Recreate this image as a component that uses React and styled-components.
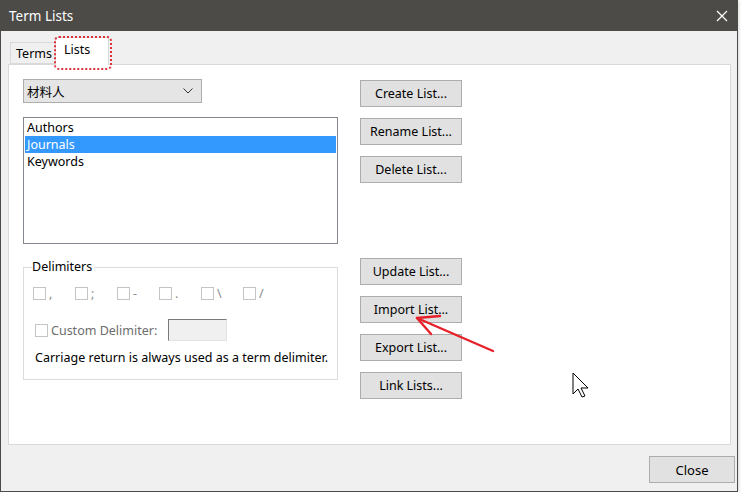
import React from "react";
import styled, { createGlobalStyle } from "styled-components";

const GlobalStyle = createGlobalStyle`
  html, body {
    margin: 0;
    padding: 0;
    background: #ffffff;
  }
  body {
    font-family: "Noto Sans", "Noto Sans CJK SC", sans-serif;
    font-size: 12.5px;
    color: #000;
  }
`;

const Window = styled.div`
  position: relative;
  width: 738px;
  height: 492px;
  box-sizing: border-box;
  border: 1px solid #4d4b48;
  border-top: none;
  background: #f0f0f0;
  display: flex;
  flex-direction: column;
  box-shadow: 1px 1px 3px rgba(0, 0, 0, 0.15);
`;

const TitleBar = styled.div`
  height: 31px;
  margin: 0 -1px;
  background: #4d4b48;
  color: #ffffff;
  display: flex;
  align-items: center;
  justify-content: space-between;
  padding: 0 10px 0 9px;
  font-size: 13.5px;
`;

const Body = styled.div`
  flex: 1;
  display: flex;
  flex-direction: column;
  padding: 0 6px 0 7px;
`;

const TabStrip = styled.div`
  height: 33px;
  display: flex;
  align-items: flex-end;
  padding-left: 2px;
`;

const Tab = styled.div`
  position: relative;
  box-sizing: border-box;
  height: ${(p) => (p.$active ? "28px" : "22px")};
  margin-bottom: ${(p) => (p.$active ? "-1px" : "0")};
  margin-left: ${(p) => (p.$active ? "-1px" : "0")};
  padding: ${(p) => (p.$active ? "3px 0 0 8px" : "2px 0 0 5px")};
  width: ${(p) => (p.$active ? "54px" : "46px")};
  background: ${(p) => (p.$active ? "#ffffff" : "#f0f0f0")};
  border: 1px solid #d9d9d9;
  border-bottom: ${(p) => (p.$active ? "none" : "1px solid #d9d9d9")};
  z-index: ${(p) => (p.$active ? 2 : 1)};
`;

const FocusRing = styled.div`
  position: absolute;
  left: -2px;
  top: -2px;
  width: 58px;
  height: 34px;
  box-sizing: border-box;
  border: 2px dotted #e0303a;
  border-radius: 5px;
`;

const Panel = styled.div`
  height: 381px;
  box-sizing: border-box;
  background: #ffffff;
  border: 1px solid #d9d9d9;
  display: flex;
  padding: 14px 0 0 14px;
  gap: 22px;
`;

const LeftColumn = styled.div`
  width: 315px;
  display: flex;
  flex-direction: column;
`;

const Combo = styled.div`
  height: 24px;
  box-sizing: border-box;
  background: #e5e5e5;
  border: 1px solid #adadad;
  display: flex;
  align-items: center;
  justify-content: space-between;
  padding: 0 8px 0 3px;
  width: 179px;
`;

const ListBox = styled.div`
  margin-top: 14px;
  height: 127px;
  box-sizing: border-box;
  border: 1px solid #828790;
  padding: 1px;
`;

const ListItem = styled.div`
  height: 17px;
  line-height: 17px;
  padding-left: 2px;
  background: ${(p) => (p.$selected ? "#3399ff" : "transparent")};
  color: ${(p) => (p.$selected ? "#ffffff" : "#000000")};
`;

const Group = styled.fieldset`
  margin: 16px 0 0 0;
  padding: 0 0 0 9px;
  height: 120px;
  box-sizing: border-box;
  border: 1px solid #dcdcdc;
  min-width: 0;
`;

const Legend = styled.legend`
  margin-left: -1px;
  padding: 0 2px 0 0;
  line-height: 14px;
`;

const CheckRow = styled.div`
  display: flex;
  margin-top: 11px;
`;

const CheckItem = styled.div`
  width: 42px;
  display: flex;
  align-items: center;
  gap: 3px;
  color: #8a8a8a;
`;

const Box = styled.span`
  width: 13px;
  height: 13px;
  box-sizing: border-box;
  border: 1px solid #c4c4c4;
  background: #ffffff;
  flex: none;
`;

const CustomRow = styled.div`
  display: flex;
  align-items: center;
  margin-top: 17px;
  padding-left: 2px;
  color: #6d6d6d;
`;

const CustomLabel = styled.span`
  margin-left: 3px;
  width: 117px;
`;

const DisabledInput = styled.div`
  width: 59px;
  height: 22px;
  box-sizing: border-box;
  background: #f0f0f0;
  border: 1px solid #e3e3e3;
  border-top-color: #7a7a7a;
  border-left-color: #7a7a7a;
`;

const Note = styled.div`
  margin-top: 8px;
  padding-left: 2px;
`;

const RightColumn = styled.div`
  display: flex;
  flex-direction: column;
  padding-top: 1px;
`;

const Button = styled.div`
  width: ${(p) => p.$width || "102px"};
  height: 27px;
  box-sizing: border-box;
  background: #e1e1e1;
  border: 1px solid #adadad;
  display: flex;
  align-items: center;
  justify-content: center;
  margin-bottom: 11px;
  &:nth-child(4) {
    margin-top: 64px;
  }
`;

const Footer = styled.div`
  display: flex;
  justify-content: flex-end;
  padding: 11px 0 0 0;
  margin-right: -4px;
`;

const CloseButton = styled(Button)`
  margin: 0;
  font-size: 13px;
`;

const Overlay = styled.svg`
  position: absolute;
  left: 0;
  top: 0;
  pointer-events: none;
  z-index: 5;
`;

const delimiters = [",", ";", "-", ".", "\\", "/"];
const lists = ["Authors", "Journals", "Keywords"];
const actions = [
  "Create List...",
  "Rename List...",
  "Delete List...",
  "Update List...",
  "Import List...",
  "Export List...",
  "Link Lists...",
];

export default function App() {
  return (
    <>
      <GlobalStyle />
      <Window>
        <TitleBar>
          <span>Term Lists</span>
          <svg width="12" height="12" viewBox="0 0 12 12">
            <path d="M1 1 L11 11 M11 1 L1 11" stroke="#ffffff" strokeWidth="1.3" />
          </svg>
        </TitleBar>
        <Body>
          <TabStrip>
            <Tab>Terms</Tab>
            <Tab $active>
              Lists
              <FocusRing />
            </Tab>
          </TabStrip>
          <Panel>
            <LeftColumn>
              <Combo>
                <span>材料人</span>
                <svg width="10" height="6" viewBox="0 0 10 6">
                  <path d="M0.5 0.5 L5 5 L9.5 0.5" stroke="#333" fill="none" strokeWidth="1" />
                </svg>
              </Combo>
              <ListBox>
                {lists.map((name) => (
                  <ListItem key={name} $selected={name === "Journals"}>
                    {name}
                  </ListItem>
                ))}
              </ListBox>
              <Group>
                <Legend>Delimiters</Legend>
                <CheckRow>
                  {delimiters.map((d) => (
                    <CheckItem key={d}>
                      <Box />
                      <span>{d}</span>
                    </CheckItem>
                  ))}
                </CheckRow>
                <CustomRow>
                  <Box />
                  <CustomLabel>Custom Delimiter:</CustomLabel>
                  <DisabledInput />
                </CustomRow>
                <Note>Carriage return is always used as a term delimiter.</Note>
              </Group>
            </LeftColumn>
            <RightColumn>
              {actions.map((a) => (
                <Button key={a}>{a}</Button>
              ))}
            </RightColumn>
          </Panel>
          <Footer>
            <CloseButton $width="86px">Close</CloseButton>
          </Footer>
        </Body>
        <Overlay width="738" height="492">
          <g stroke="#e8202a" strokeWidth="2.4" strokeLinecap="round" fill="none">
            <path d="M492 351 L416 318" />
            <path d="M416 318 L439 316" />
            <path d="M416 318 L430 334" />
          </g>
          <path
            d="M572 373 L572 394 L577 389 L581 397 L584 396 L580 388 L587 388 Z"
            fill="#ffffff"
            stroke="#000"
            strokeWidth="1"
            strokeLinejoin="round"
          />
        </Overlay>
      </Window>
    </>
  );
}
